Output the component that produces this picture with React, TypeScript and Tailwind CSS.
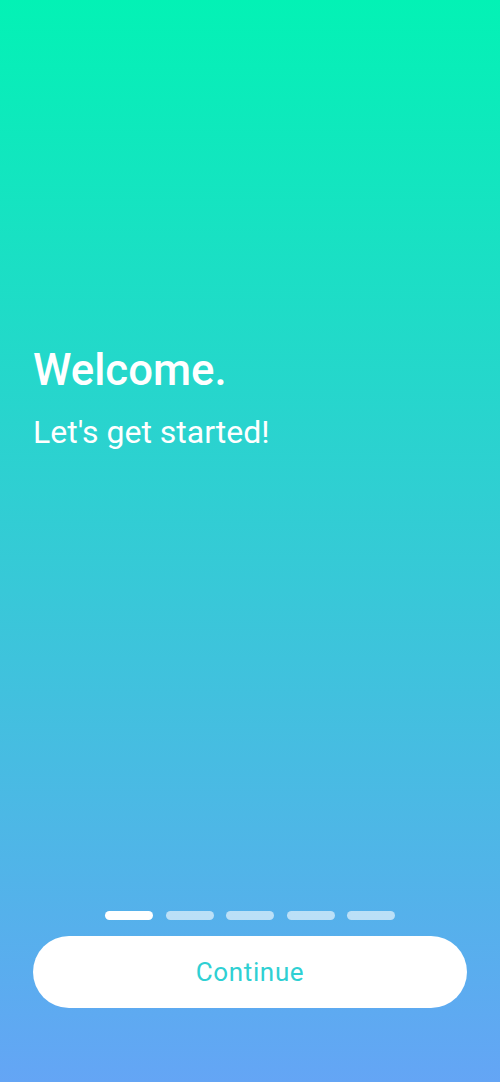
export default function App() {
  const steps = [0, 1, 2, 3, 4]
  return (
    <div
      className="h-[1082px] w-full flex flex-col bg-[linear-gradient(to_bottom,#03f2b5,#64a5f5)] px-[33px] pb-[74px]"
      style={{ fontFamily: "Roboto, 'Noto Sans', sans-serif" }}
    >
      {/* Heading */}
      <div className="flex-1 pt-[344px]">
        <h1 className="text-[43.7px] leading-[52px] font-medium text-white">Welcome.</h1>
        <p className="mt-[16px] text-[32px] leading-[40px] text-white">Let's get started!</p>
      </div>

      {/* Pager */}
      <div className="flex justify-center gap-[12.5px] mb-[16px]">
        {steps.map((i) => (
          <span
            key={i}
            className={
              i === 0
                ? "h-[9px] w-[48px] rounded-full bg-white"
                : "h-[9px] w-[48px] rounded-full bg-white/60"
            }
          />
        ))}
      </div>

      {/* Button */}
      <button className="h-[72px] w-full rounded-full bg-white text-[26px] text-[#2fd0d3] tracking-wide">
        Continue
      </button>
    </div>
  )
}
